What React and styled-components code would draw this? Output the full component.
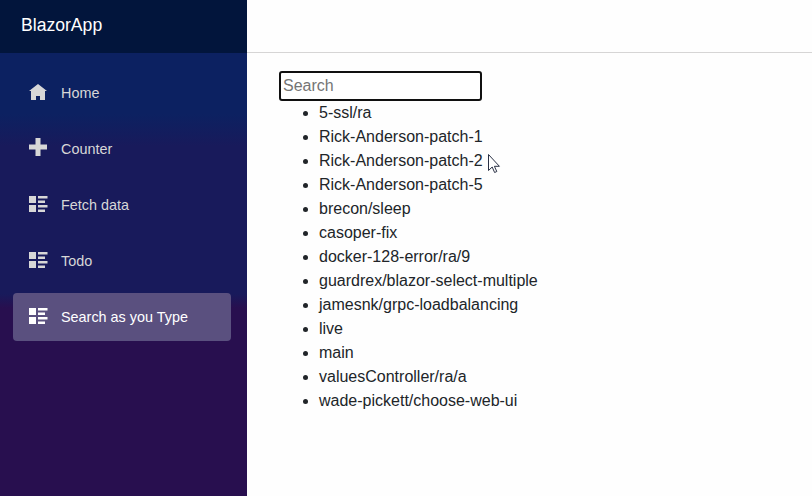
import React from "react";
import styled, { createGlobalStyle } from "styled-components";

const GlobalStyle = createGlobalStyle`
  *, *::before, *::after { box-sizing: border-box; }
  body {
    margin: 0;
    overflow: hidden;
    background: #fefefe;
    color: #212529;
    font: 16px/24px "Liberation Sans", Arial, sans-serif;
  }
`;

const Page = styled.div`
  display: flex;
  height: 100vh;
`;

const Sidebar = styled.aside`
  flex: 0 0 247px;
  background: linear-gradient(
    180deg,
    #0c2161 0,
    #0c2161 114px,
    #181a5b 146px,
    #181a5b 294px,
    #280f4f 308px,
    #280f4f 100%
  );
`;

const Brand = styled.header`
  height: 53px;
  padding: 10px 21px 0;
  background: #02153c;
  color: #fff;
  font-size: 17.6px;
  line-height: 30px;
`;

const Nav = styled.nav`
  display: flex;
  flex-direction: column;
  gap: 8px;
  padding: 16px 16px 0 13px;
`;

const NavItem = styled.a`
  display: flex;
  align-items: center;
  gap: 13px;
  height: 48px;
  padding-left: 16px;
  border-radius: 4px;
  font-size: 14.4px;
  color: ${(p) => (p.$active ? "#fff" : "#d7d7d7")};
  background: ${(p) => (p.$active ? "#5a507f" : "transparent")};
`;

const Icon = styled.svg`
  width: 19px;
  height: 18px;
  margin-top: -4px;
  fill: currentColor;
`;

const Main = styled.main`
  flex: 1;
`;

const TopBar = styled.div`
  height: 53px;
  border-bottom: 1px solid #d6d5d5;
`;

const Content = styled.section`
  padding: 18px 32px;
`;

const SearchInput = styled.input`
  display: block;
  width: 203px;
  height: 30px;
  padding: 0 2px;
  border: 2px solid #101010;
  border-radius: 3px;
  outline: none;
  background: #fff;
  font: inherit;
  &::placeholder { color: #757575; opacity: 1; }
`;

const BranchList = styled.ul`
  margin: 0;
  padding-left: 40px;
`;

const Pointer = styled.svg`
  position: absolute;
  left: 488px;
  top: 153px;
  width: 13px;
  height: 21px;
`;

const HomeIcon = () => (
  <Icon viewBox="0 0 19 18">
    <path d="M9 2L0 9h2v9h5v-4h4v4h5V9h2z" />
  </Icon>
);

const PlusIcon = () => (
  <Icon viewBox="0 0 19 18">
    <path d="M6.5 0h5v6.5H18v5h-6.5V18h-5v-6.5H0v-5h6.5z" />
  </Icon>
);

const ListIcon = () => (
  <Icon viewBox="0 0 19 18">
    <path d="M0 2h7v7H0zM0 11h7v7H0zM9 2h9.5v2.5H9zM9 6.6h7V9H9zM9 11h9.5v2.5H9zM9 15.6h7V18H9z" />
  </Icon>
);

const navItems = [
  { label: "Home", Glyph: HomeIcon },
  { label: "Counter", Glyph: PlusIcon },
  { label: "Fetch data", Glyph: ListIcon },
  { label: "Todo", Glyph: ListIcon },
  { label: "Search as you Type", Glyph: ListIcon, active: true },
];

const branches = [
  "5-ssl/ra",
  "Rick-Anderson-patch-1",
  "Rick-Anderson-patch-2",
  "Rick-Anderson-patch-5",
  "brecon/sleep",
  "casoper-fix",
  "docker-128-error/ra/9",
  "guardrex/blazor-select-multiple",
  "jamesnk/grpc-loadbalancing",
  "live",
  "main",
  "valuesController/ra/a",
  "wade-pickett/choose-web-ui",
];

export default function App() {
  return (
    <Page>
      <GlobalStyle />
      <Sidebar>
        <Brand>BlazorApp</Brand>
        <Nav>
          {navItems.map(({ label, Glyph, active }) => (
            <NavItem key={label} $active={active}>
              <Glyph />
              {label}
            </NavItem>
          ))}
        </Nav>
      </Sidebar>
      <Main>
        <TopBar />
        <Content>
          <SearchInput placeholder="Search" />
          <BranchList>
            {branches.map((name) => (
              <li key={name}>{name}</li>
            ))}
          </BranchList>
        </Content>
      </Main>
      <Pointer viewBox="0 0 13 21">
        <path
          d="M.5 1.5v16l3.7-3.5 2.4 5.5 2.2-1-2.4-5.2h5z"
          fill="#fff"
          stroke="#2a3145"
          strokeWidth="1"
        />
      </Pointer>
    </Page>
  );
}
